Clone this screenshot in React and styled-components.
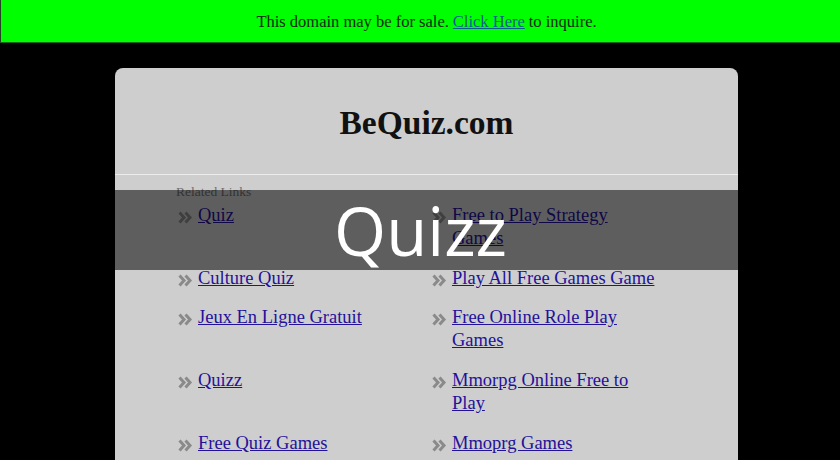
import React from 'react';
import styled, { createGlobalStyle } from 'styled-components';

const GlobalStyle = createGlobalStyle`
  html, body {
    margin: 0;
    padding: 0;
    background: #000;
    overflow: hidden;
  }
`;

const Banner = styled.div`
  height: 42px;
  background: #00ff00;
  border-bottom: 1px solid #0b6b0b;
  border-left: 1px solid #224422;
  display: flex;
  align-items: center;
  justify-content: center;
  padding: 2px 0 0 12px;
  box-sizing: border-box;
  height: 43px;
  font-family: 'Liberation Serif', serif;
  font-size: 16.5px;
  color: #0f2a0f;

  a {
    color: #0b5f8f;
    text-decoration: underline;
    margin: 0 4px;
  }
`;

const Card = styled.div`
  position: relative;
  width: 623px;
  margin: 25px 0 0 115px;
  background: #cecece;
  border-radius: 8px 8px 0 0;
  font-family: 'Liberation Serif', serif;
  min-height: 400px;
`;

const Header = styled.div`
  height: 107px;
  display: flex;
  align-items: center;
  justify-content: center;
  padding-top: 4px;
  box-sizing: border-box;
  border-bottom: 1px solid #ececec;

  h1 {
    margin: 0;
    font-size: 33.5px;
    font-weight: bold;
    color: #111;
  }
`;

const Body = styled.div`
  padding: 9px 0 0 61px;
`;

const Caption = styled.div`
  font-size: 13.5px;
  line-height: 16px;
  color: #707070;
  margin-bottom: 4px;
`;

const LinkGrid = styled.div`
  display: grid;
  grid-template-columns: 254px 254px;
  row-gap: 16.7px;
  padding-left: 2px;
`;

const Item = styled.div`
  display: flex;
  align-items: flex-start;

  a {
    width: 203px;
    font-size: 18.5px;
    line-height: 23px;
    color: #24119a;
    text-decoration: underline;
  }
`;

const Bullet = styled.svg`
  flex: none;
  width: 15px;
  height: 13px;
  margin: 7px 5px 0 0;
`;

const Overlay = styled.div`
  position: absolute;
  left: 0;
  right: 0;
  top: 122px;
  height: 80px;
  background: rgba(0, 0, 0, 0.54);
  display: flex;
  align-items: center;
  justify-content: center;
  padding-right: 12px;
  font-family: 'Open Sans', sans-serif;
  font-size: 67px;
  color: #fff;
  line-height: 1;
`;

const rows = [
  ['Quiz', 'Free to Play Strategy Games'],
  ['Culture Quiz', 'Play All Free Games Game'],
  ['Jeux En Ligne Gratuit', 'Free Online Role Play Games'],
  ['Quizz', 'Mmorpg Online Free to Play'],
  ['Free Quiz Games', 'Mmoprg Games'],
];

const Chevrons = () => (
  <Bullet viewBox="0 0 15 13">
    <path d="M1.5 1.5 L6 6.5 L1.5 11.5 M7.5 1.5 L12 6.5 L7.5 11.5" fill="none" stroke="#8a8a8a" strokeWidth="3" />
  </Bullet>
);

export default function App() {
  return (
    <>
      <GlobalStyle />
      <Banner>
        This domain may be for sale. <a href="#">Click Here</a> to inquire.
      </Banner>
      <Card>
        <Header>
          <h1>BeQuiz.com</h1>
        </Header>
        <Body>
          <Caption>Related Links</Caption>
          <LinkGrid>
            {rows.flat().map((label, i) => (
              <Item key={i}>
                <Chevrons />
                <a href="#">{label}</a>
              </Item>
            ))}
          </LinkGrid>
        </Body>
        <Overlay>Quizz</Overlay>
      </Card>
    </>
  );
}
